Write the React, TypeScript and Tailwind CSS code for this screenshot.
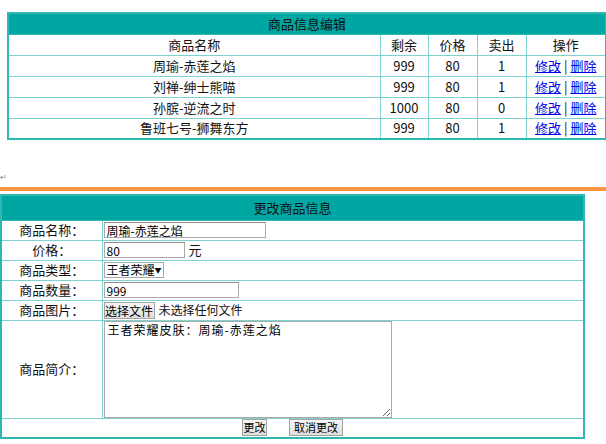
import React from "react";

const goods = [
  { name: "周瑜-赤莲之焰", left: 999, price: 80, sold: 1 },
  { name: "刘禅-绅士熊喵", left: 999, price: 80, sold: 1 },
  { name: "孙膑-逆流之时", left: 1000, price: 80, sold: 0 },
  { name: "鲁班七号-狮舞东方", left: 999, price: 80, sold: 1 },
];

const cell = "border border-[#7fd3cf] p-0 text-center leading-[18px]";
const inputCls =
  "h-[16px] border border-[#a9a9a9] border-t-[#8f8f8f] bg-white px-[2px] text-[12px] leading-[14px] text-black outline-none";

function Btn({ children, w, size = "text-[12px]" }: { children: React.ReactNode; w: string; size?: string }) {
  return (
    <button
      className={`${w} ${size} h-[17px] whitespace-nowrap border border-[#a3a3a3] bg-gradient-to-b from-[#f6f6f6] to-[#dedede] p-0 leading-[15px] text-black`}
    >
      {children}
    </button>
  );
}

export default function App() {
  return (
    <div className="relative h-[444px] w-[606px] overflow-hidden bg-white font-['Noto_Sans_CJK_SC','Noto_Sans',sans-serif] text-[13px] text-[#111]">
      <div className="pl-[7px] pt-[12px]">
        <table className="w-[598px] table-fixed border-collapse border-2 border-[#2db8b4]">
          <colgroup>
            <col className="w-[372px]" />
            <col className="w-[48px]" />
            <col className="w-[49px]" />
            <col className="w-[49px]" />
            <col className="w-[80px]" />
          </colgroup>
          <thead>
            <tr className="h-[21px] bg-[#00a6a1]">
              <th colSpan={5} className="border border-[#2db8b4] p-0 font-normal leading-[18px] text-[#111]">
                商品信息编辑
              </th>
            </tr>
          </thead>
          <tbody>
            <tr className="h-[21px]">
              <td className={cell}>商品名称</td>
              <td className={cell}>剩余</td>
              <td className={cell}>价格</td>
              <td className={cell}>卖出</td>
              <td className={cell}>操作</td>
            </tr>
            {goods.map((g) => (
              <tr key={g.name} className="h-[21px]">
                <td className={cell}>{g.name}</td>
                <td className={cell}>{g.left}</td>
                <td className={cell}>{g.price}</td>
                <td className={cell}>{g.sold}</td>
                <td className={cell}>
                  <a href="#" className="text-[#0000ee] underline">修改</a>
                  <span> | </span>
                  <a href="#" className="text-[#0000ee] underline">删除</a>
                </td>
              </tr>
            ))}
          </tbody>
        </table>
      </div>

      <div className="mt-[33px] h-[14px] text-[8px] leading-[8px] text-[#888]">↵</div>

      <div className="h-[4px] w-full bg-[#f7963f]" />

      <table className="mt-[3px] w-[585px] table-fixed border-collapse border-2 border-[#2db8b4]">
        <colgroup>
          <col className="w-[101px]" />
          <col />
        </colgroup>
        <thead>
          <tr className="h-[25px] bg-[#00a6a1]">
            <th colSpan={2} className="border border-[#2db8b4] p-0 font-normal leading-[18px] text-[#111]">
              更改商品信息
            </th>
          </tr>
        </thead>
        <tbody>
          <tr className="h-[20px]">
            <td className={cell}>商品名称：</td>
            <td className="border border-[#7fd3cf] p-0 pl-[1px]">
              <input className={`${inputCls} block w-[162px]`} defaultValue="周瑜-赤莲之焰" />
            </td>
          </tr>
          <tr className="h-[20px]">
            <td className={cell}>价格：</td>
            <td className="border border-[#7fd3cf] p-0 pl-[1px]">
              <div className="flex items-center gap-[4px]">
                <input className={`${inputCls} w-[81px]`} defaultValue="80" />
                <span className="leading-[16px]">元</span>
              </div>
            </td>
          </tr>
          <tr className="h-[20px]">
            <td className={cell}>商品类型：</td>
            <td className="border border-[#7fd3cf] p-0 pl-[1px]">
              <span className="flex h-[16px] w-[60px] items-center justify-between whitespace-nowrap border border-[#a9a9a9] bg-white px-[2px] text-[12px] leading-[14px] text-black">
                <span>王者荣耀</span>
                <span className="text-[7px]">▼</span>
              </span>
            </td>
          </tr>
          <tr className="h-[20px]">
            <td className={cell}>商品数量：</td>
            <td className="border border-[#7fd3cf] p-0 pl-[1px]">
              <input className={`${inputCls} block w-[135px]`} defaultValue="999" />
            </td>
          </tr>
          <tr className="h-[20px]">
            <td className={cell}>商品图片：</td>
            <td className="border border-[#7fd3cf] p-0 pl-[1px]">
              <div className="flex items-center gap-[4px] text-[12px] leading-[16px]">
                <Btn w="w-[51px]">选择文件</Btn>
                <span>未选择任何文件</span>
              </div>
            </td>
          </tr>
          <tr className="h-[98px]">
            <td className={cell}>商品简介：</td>
            <td className="border border-[#7fd3cf] p-0 pl-[1px] align-top">
              <textarea
                className="block h-[97px] w-[288px] border border-[#a9a9a9] bg-white px-[3px] py-[1px] text-[12px] leading-[14px] tracking-[1px] text-black outline-none"
                defaultValue="王者荣耀皮肤：周瑜-赤莲之焰"
              />
            </td>
          </tr>
          <tr className="h-[20px]">
            <td colSpan={2} className="border border-[#7fd3cf] p-0">
              <div className="flex items-center justify-center gap-[22px]">
                <Btn w="w-[25px]" size="text-[11px]">更改</Btn>
                <Btn w="w-[54px]" size="text-[11px]">取消更改</Btn>
              </div>
            </td>
          </tr>
        </tbody>
      </table>
    </div>
  );
}
